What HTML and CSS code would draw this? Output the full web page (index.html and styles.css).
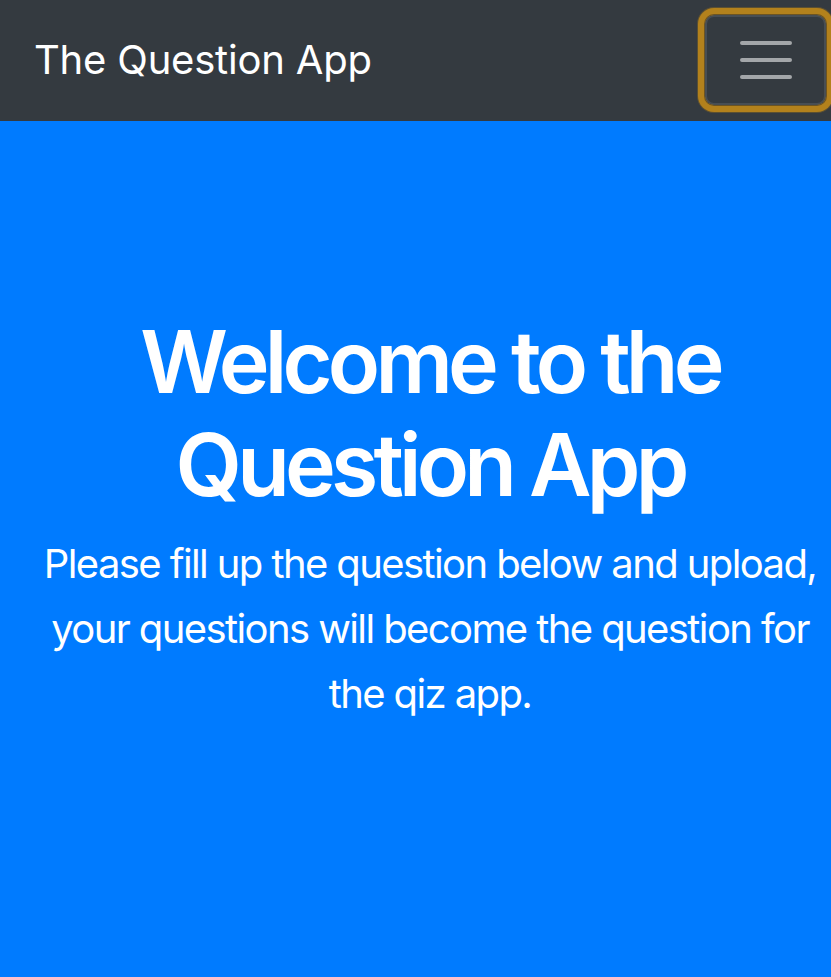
FILE: index.html
```html
<!DOCTYPE html>
<html lang="en">
<head>
<meta charset="utf-8">
<title>The Question App</title>
<link rel="stylesheet" href="styles.css">
</head>
<body>
<nav class="navbar">
  <a class="brand" href="#">The Question App</a>
  <button class="toggler" type="button" aria-label="Toggle navigation">
    <svg class="toggler-icon" viewBox="0 0 60 44" width="60" height="44">
      <path d="M6 5h48M6 22h48M6 39h48" stroke="rgba(255,255,255,0.55)" stroke-width="4" stroke-linecap="round" fill="none"/>
    </svg>
  </button>
</nav>
<main class="jumbotron">
  <h1 class="title">Welcome to the Question App</h1>
  <p class="lead">Please fill up the question below and upload, your questions will become the question for the qiz app.</p>
</main>
</body>
</html>
```
FILE: styles.css
```css
html, body {
  margin: 0;
  padding: 0;
}
body {
  font-family: Inter, "Noto Sans", Roboto, sans-serif;
  background: #007bff;
  overflow: hidden;
}
.navbar {
  display: flex;
  align-items: center;
  justify-content: space-between;
  height: 121px;
  box-sizing: border-box;
  padding: 0 5px 0 34px;
  background: #343a40;
}
.brand {
  color: #fff;
  text-decoration: none;
  font-size: 40px;
  font-weight: 400;
  letter-spacing: -0.2px;
  margin-top: -2px;
}
.toggler {
  display: flex;
  align-items: center;
  justify-content: center;
  width: 121px;
  height: 90px;
  margin-top: -2px;
  padding: 0;
  background: transparent;
  border: 2px solid rgba(255,255,255,0.1);
  border-radius: 9px;
  box-shadow: 0 0 0 1px rgba(40,40,40,0.5), 0 0 0 7px #b3811c, 0 0 0 8px rgba(120,95,40,0.6);
}
.toggler-icon {
  display: block;
}
.jumbotron {
  box-sizing: border-box;
  min-height: calc(100vh - 121px);
  padding: 190px 0 40px 29px;
  background: #007bff;
  color: #fff;
  text-align: center;
}
.title {
  margin: 0;
  font-size: 86px;
  font-weight: 600;
  line-height: 1.2;
  letter-spacing: -4.8px;
}
.lead {
  margin: 14px 0 0;
  font-size: 40px;
  font-weight: 400;
  line-height: 65px;
  letter-spacing: -1.6px;
}
```
